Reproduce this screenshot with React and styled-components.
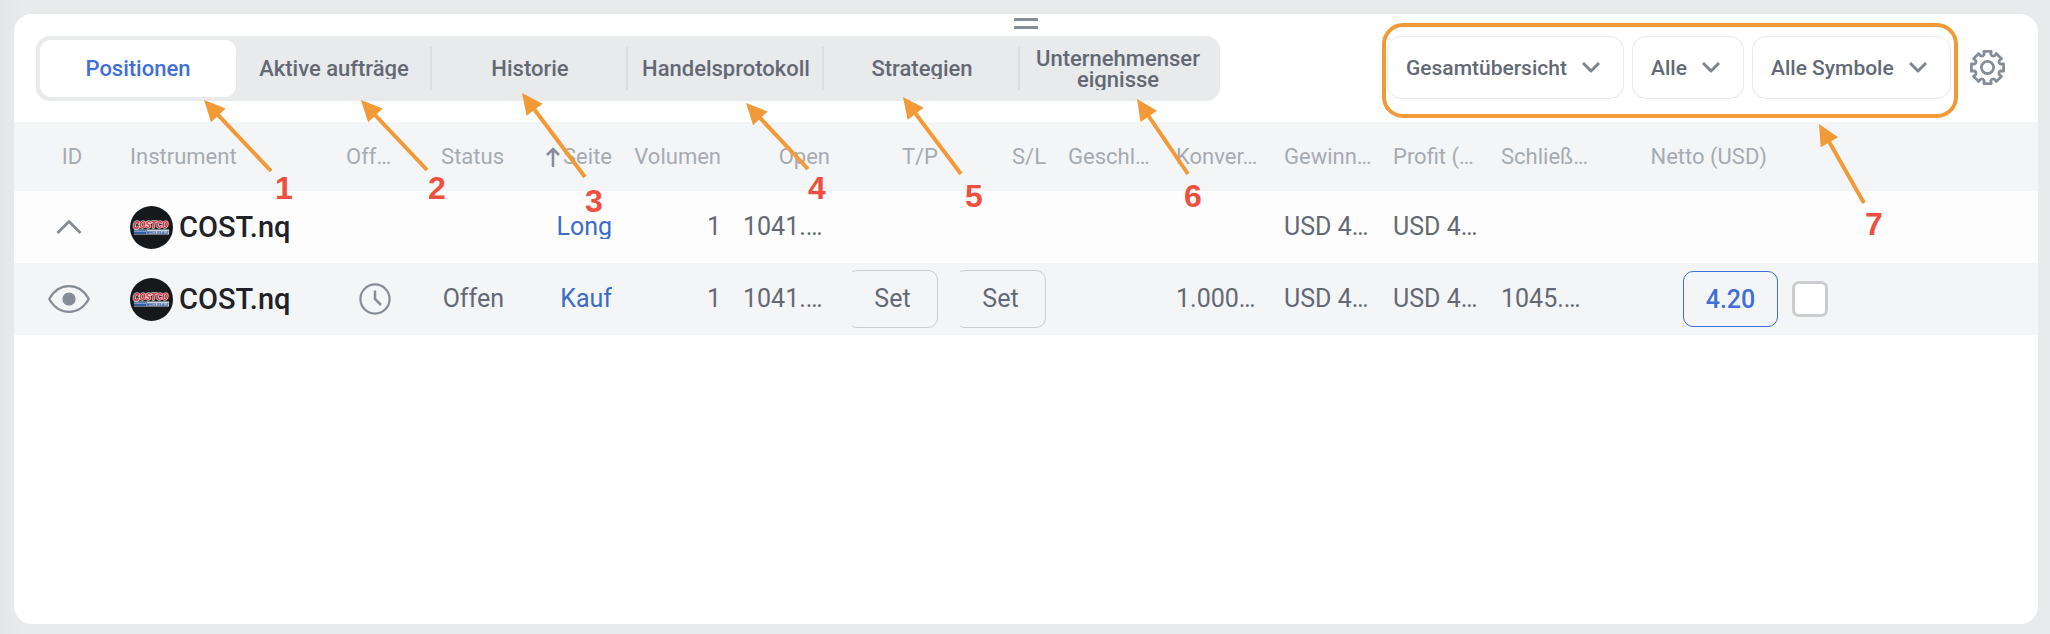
import React, { useState } from 'react';
import styled, { createGlobalStyle, css } from 'styled-components';

const GlobalStyle = createGlobalStyle`
    *{
        box-sizing:border-box;
    }
    body{
        margin:0;
        background:#e9eaec;
        font-family:Roboto, "Liberation Sans", sans-serif;
        color:#636974;
    }
    button,select{
        font-family:inherit;
        color:inherit;
        cursor:pointer;
    }
`

const Page = styled.div`
    min-height:100vh;
    display:flex;
    padding:14px 12px 10px 14px;
    background:linear-gradient(90deg, #e5e6e8 0, #e9eaec 24px);
`

const Panel = styled.main`
    position:relative;
    flex:1;
    min-width:0;
    background:#fff;
    border-radius:18px;
    overflow:hidden;
`

const DragHandle = styled.div`
    position:absolute;
    top:4px;
    left:50%;
    width:24px;
    height:11px;
    margin-left:-12px;
    border:solid #868d97;
    border-width:3px 0;
    border-radius:1px;
`

const Toolbar = styled.header`
    display:flex;
    align-items:flex-start;
    padding:22px 32px 21px 22px;
`

const Tabs = styled.nav`
    display:flex;
    height:65px;
    padding:4px;
    background:#e9eaec;
    border-radius:14px;
`

const Tab = styled.button`
    display:flex;
    align-items:center;
    justify-content:center;
    width:196px;
    padding:0;
    border:0;
    border-radius:11px;
    background:transparent;
    font-size:22px;
    font-weight:500;
    line-height:21px;
    span{
        max-width:168px;
        overflow:hidden;
        overflow-wrap:anywhere;
    }
    ${props=>props.$active&&css`
        background:#fff;
        color:#3f6fd8;
    `}
    ${props=>props.$divider&&css`
        border-radius:0;
        background:linear-gradient(#dcdee1, #dcdee1) right center / 2px 43px no-repeat;
    `}
`

const Filters = styled.div`
    position:relative;
    display:flex;
    gap:8px;
    margin-left:auto;
    margin-right:18px;
`

const FilterBox = styled.label`
    display:grid;
    align-items:center;
    svg{
        grid-area:1 / 1;
        justify-self:end;
        margin-right:24px;
        pointer-events:none;
    }
`

const Select = styled.select`
    grid-area:1 / 1;
    appearance:none;
    height:63px;
    padding:0 56px 0 18px;
    border:1px solid #e9eaec;
    border-radius:14px;
    background:#fff;
    font-size:21px;
    font-weight:500;
`

const FilterFrame = styled.div`
    position:absolute;
    top:-13px;
    left:-5px;
    right:-7px;
    height:95px;
    border:4px solid #f29a38;
    border-radius:21px;
    pointer-events:none;
`

const IconButton = styled.button`
    display:flex;
    align-items:center;
    justify-content:center;
    height:${props=>props.$height||'auto'};
    padding:0;
    border:0;
    background:transparent;
`

const Table = styled.table`
    width:100%;
    table-layout:fixed;
    border-collapse:collapse;
`

const HeadRow = styled.tr`
    height:69px;
    background:#f4f5f7;
`

const Row = styled.tr`
    height:72px;
    background:${props=>props.$shade?'#f4f5f7':'#fdfdfd'};
`

const cell = css`
    padding:0 11px;
    text-align:${props=>props.$align||'left'};
    white-space:nowrap;
`

const HeadCell = styled.th`
    ${cell}
    font-size:22px;
    font-weight:400;
    line-height:24px;
    color:#a6abb2;
    &:first-child{
        padding-left:22px;
    }
`

const Cell = styled.td`
    ${cell}
    font-size:25px;
    line-height:24px;
    ${props=>props.$flush&&css`
        padding:0;
    `}
`

const EndAligned = styled.div`
    display:flex;
    align-items:center;
    justify-content:flex-end;
    gap:3px;
    svg{
        flex:none;
    }
`

const Centered = styled.div`
    display:flex;
    justify-content:center;
    padding-left:4px;
`

const Instrument = styled.div`
    display:flex;
    align-items:center;
    gap:6px;
    font-size:29px;
    font-weight:500;
    color:#1f2227;
`

const Side = styled.div`
    overflow:hidden;
    color:#3b6cc9;
`

const SetBox = styled.div`
    display:flex;
    justify-content:flex-end;
    overflow:hidden;
`

const SetButton = styled.button`
    flex:none;
    width:91px;
    height:58px;
    padding:0 0 2px;
    border:1px solid #c9ccd0;
    border-radius:10px;
    background:transparent;
    font-size:25px;
`

const NetButton = styled.button`
    width:95px;
    height:56px;
    padding:0;
    border:1px solid #3f6fd8;
    border-radius:10px;
    background:transparent;
    font-size:25px;
    font-weight:500;
    && {
        color:#3f6fd8;
    }
`

const Check = styled.input`
    appearance:none;
    display:block;
    width:36px;
    height:36px;
    margin:0 0 0 14px;
    border:3px solid #cbccd0;
    border-radius:7px;
    background:#fff;
`

const Notes = styled.svg`
    position:absolute;
    top:${props=>props.$top||0};
    ${props=>props.$right?css`right:${props.$right};`:css`left:0;`}
    overflow:visible;
    pointer-events:none;
    text{
        font:bold 32px "Liberation Sans", Arial, sans-serif;
        fill:#ef4f3e;
    }
`

const tabs = ['Positionen', 'Aktive aufträge', 'Historie', 'Handelsprotokoll', 'Strategien', 'Unternehmensereignisse'];
const filters = ['Gesamtübersicht', 'Alle', 'Alle Symbole'];

const columns = [
    { title:'ID', width:105, align:'center' },
    { title:'Instrument', width:216 },
    { title:'Off…', width:67 },
    { title:'Status', width:113, align:'right' },
    { title:'Seite', width:108, align:'right', sorted:true },
    { title:'Volumen', width:109, align:'right' },
    { title:'Open', width:109, align:'right' },
    { title:'T/P', width:108, align:'right' },
    { title:'S/L', width:108, align:'right' },
    { title:'Geschl…', width:108 },
    { title:'Konver…', width:108 },
    { title:'Gewinn…', width:109 },
    { title:'Profit (…', width:108 },
    { title:'Schließ…', width:108 },
    { title:'Netto (USD)', width:180, align:'right' },
    { title:'' },
];

// arrow tip, arrow tail, then the left edge and baseline of the number
const notes = [
    { n:1, tip:[190,86], tail:[257,157], label:[261,185] },
    { n:2, tip:[347,86], tail:[413,156], label:[414,185] },
    { n:3, tip:[508,79], tail:[571,163], label:[571,198] },
    { n:4, tip:[732,89], tail:[794,155], label:[794,185] },
    { n:5, tip:[889,83], tail:[947,160], label:[951,193] },
    { n:6, tip:[1123,85], tail:[1174,160], label:[1170,193] },
];

function Note({n,tip,tail,label}){
    const length = Math.hypot(tip[0]-tail[0], tip[1]-tail[1]);
    const angle = Math.atan2(tail[1]-tip[1], tail[0]-tip[0])*180/Math.PI;
    return(
        <g>
            <g transform={`translate(${tip[0]} ${tip[1]}) rotate(${angle})`} fill="#f29a38">
                <path d={`M0 0L21 -10V-2H${length}V2H21V10Z`} />
            </g>
            <text x={label[0]} y={label[1]}>{n}</text>
        </g>
    )
}

function Chevron(){
    return(
        <svg width="18" height="11" viewBox="0 0 18 11" fill="none" stroke="#7f8691" strokeWidth="3">
            <path d="M1 1L9 9L17 1" strokeLinejoin="round" />
        </svg>
    )
}

function gearPath(){
    const point = (r,deg)=>{
        const a = (deg-90)*Math.PI/180;
        return `${(19+r*Math.cos(a)).toFixed(2)} ${(19+r*Math.sin(a)).toFixed(2)}`;
    };
    let d = '';
    for(let a=0;a<360;a+=45){
        d += `${a?'L':'M'}${point(14,a-14)}L${point(17,a-13)}L${point(17,a+13)}L${point(14,a+14)}Q${point(12,a+22)} ${point(14,a+31)}`;
    }
    return d+'Z';
}

function Gear(){
    return(
        <svg width="37" height="37" viewBox="0 0 38 38" fill="none" stroke="#868d97" strokeWidth="2.8" strokeLinejoin="round">
            <path d={gearPath()} />
            <circle cx="19" cy="19" r="6.3" />
        </svg>
    )
}

function CostcoLogo(){
    return(
        <svg width="43" height="43" viewBox="0 0 43 43" aria-hidden="true">
            <circle cx="21.5" cy="21.5" r="21.5" fill="#15191c" />
            <path d="M4 23.4H39V28.6H4Z" fill="#cfd6e0" />
            <path d="M4 24.2H17V25H4ZM4 25.5H16V28H4Z" fill="#2f5fa5" />
            <g fontFamily="Roboto, sans-serif" fontStyle="italic" fontWeight="900">
                <text x="16" y="27.7" fontSize="4" fill="#2f5fa5">WHOLESALE</text>
                <g fill="#dc3542" stroke="#fff" strokeWidth="1.1" paintOrder="stroke">
                    <text x="3" y="22.8" fontSize="11">C</text>
                    <text x="9.500" y="22.4" fontSize="9">OSTCO</text>
                </g>
            </g>
        </svg>
    )
}

function InstrumentName(){
    return(
        <Instrument>
            <CostcoLogo />
            COST.nq
        </Instrument>
    )
}

function PositionsTable(){
    return(
        <Table>
            <colgroup>
                {columns.map(c=><col key={c.title} width={c.width} />)}
            </colgroup>
            <thead>
                <HeadRow>
                    {columns.map(c=>(
                        <HeadCell key={c.title} $align={c.align}>
                            {c.sorted?<EndAligned>
                                <svg width="14" height="20" viewBox="0 0 14 20" fill="none" stroke="#868d97" strokeWidth="2.6">
                                    <path d="M7 20V2M1 8L7 2L13 8" />
                                </svg>
                                {c.title}
                            </EndAligned>:c.title}
                        </HeadCell>
                    ))}
                </HeadRow>
            </thead>
            <tbody>
                <Row>
                    <Cell $flush>
                        <Centered>
                            <IconButton aria-label="Einklappen">
                                <svg width="26" height="14" viewBox="0 0 26 14" fill="none" stroke="#868d97" strokeWidth="2.8" strokeLinejoin="round">
                                    <path d="M1.5 13L13 1.6L24.5 13" />
                                </svg>
                            </IconButton>
                        </Centered>
                    </Cell>
                    <Cell><InstrumentName /></Cell>
                    <Cell />
                    <Cell />
                    <Cell $align="right"><Side>Long</Side></Cell>
                    <Cell $align="right">1</Cell>
                    <Cell>1041.…</Cell>
                    <Cell />
                    <Cell />
                    <Cell />
                    <Cell />
                    <Cell>USD 4…</Cell>
                    <Cell>USD 4…</Cell>
                    <Cell />
                    <Cell />
                    <Cell />
                </Row>
                <Row $shade>
                    <Cell $flush>
                        <Centered>
                            <IconButton aria-label="Anzeigen">
                                <svg width="42" height="28" viewBox="0 0 42 28" fill="none" stroke="#868d97" strokeWidth="2.2">
                                    <path d="M1.2 14C6 5.5 12.5 1.2 21 1.2S36 5.5 40.8 14C36 22.5 29.5 26.8 21 26.8S6 22.5 1.2 14Z" strokeLinejoin="round" />
                                    <circle cx="21" cy="14" r="6.6" fill="#868d97" stroke="none" />
                                </svg>
                            </IconButton>
                        </Centered>
                    </Cell>
                    <Cell><InstrumentName /></Cell>
                    <Cell>
                        <EndAligned>
                            <svg width="32" height="32" viewBox="0 0 32 32" fill="none" stroke="#868d97" strokeWidth="2.2">
                                <circle cx="16" cy="16" r="14.6" />
                                <path d="M16 7.5V16L22 22" strokeWidth="2.5" />
                            </svg>
                        </EndAligned>
                    </Cell>
                    <Cell $align="right">Offen</Cell>
                    <Cell $align="right"><Side>Kauf</Side></Cell>
                    <Cell $align="right">1</Cell>
                    <Cell>1041.…</Cell>
                    <Cell><SetBox><SetButton>Set</SetButton></SetBox></Cell>
                    <Cell><SetBox><SetButton>Set</SetButton></SetBox></Cell>
                    <Cell />
                    <Cell>1.000…</Cell>
                    <Cell>USD 4…</Cell>
                    <Cell>USD 4…</Cell>
                    <Cell>1045.…</Cell>
                    <Cell $flush $align="right"><NetButton>4.20</NetButton></Cell>
                    <Cell $flush><Check type="checkbox" aria-label="Position auswählen" /></Cell>
                </Row>
            </tbody>
        </Table>
    )
}

function App(){
    const [active,setActive] = useState(0);
    return(
        <>
            <GlobalStyle />
            <Page>
                <Panel>
                    <DragHandle />
                    <Toolbar>
                        <Tabs>
                            {tabs.map((name,i)=>(
                                <Tab
                                    key={name}
                                    $active={i===active}
                                    $divider={i!==active&&i<tabs.length-1}
                                    onClick={()=>setActive(i)}>
                                    <span>{name}</span>
                                </Tab>
                            ))}
                        </Tabs>
                        <Filters>
                            {filters.map(name=>(
                                <FilterBox key={name}>
                                    <Select aria-label={name}>
                                        <option>{name}</option>
                                    </Select>
                                    <Chevron />
                                </FilterBox>
                            ))}
                            <FilterFrame />
                            <Notes $top="87px" $right="0" width="132" height="114">
                                <Note n={7} tip={[0,1]} tail={[45,80]} label={[46,112]} />
                            </Notes>
                        </Filters>
                        <IconButton $height="63px" aria-label="Einstellungen"><Gear /></IconButton>
                    </Toolbar>
                    <PositionsTable />
                    <Notes width="1220" height="210">
                        {notes.map(note=><Note key={note.n} {...note} />)}
                    </Notes>
                </Panel>
            </Page>
        </>
    )
}

export default App;
